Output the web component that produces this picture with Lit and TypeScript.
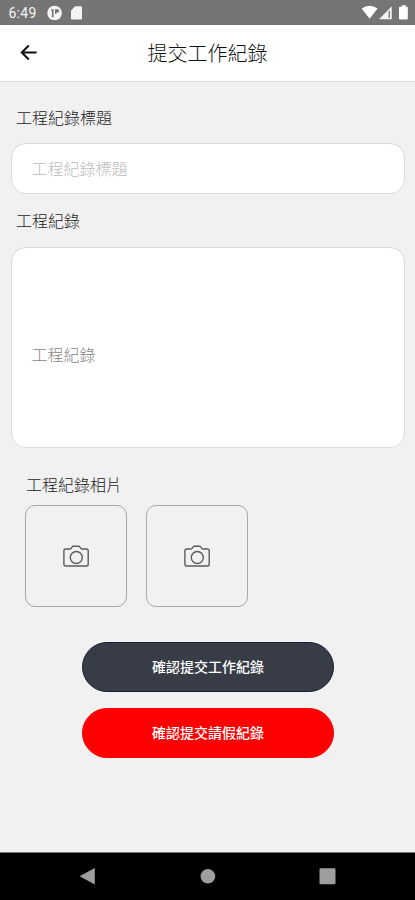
import { LitElement, html, css } from "lit";
import { customElement, property } from "lit/decorators.js";

@customElement("status-bar")
class StatusBar extends LitElement {
  static styles = css`
    :host { display: flex; height: 24.5px; flex: none; background: #757575; color: #fff; align-items: center; padding: 0 4px 0 8.5px; box-sizing: border-box; }
    .time { font: 14px/24px Roboto, sans-serif; width: 38.5px; color: #f4f4f4; padding-top: 2px; letter-spacing: .25px; }
    .gap { flex: 1; }
    svg { display: block; }
  `;
  render() {
    return html`
      <span class="time">6:49</span>
      <svg width="40" height="24" viewBox="0 0 40 24">
        <circle cx="7.6" cy="13" r="7.3" fill="#f4f4f4"/>
        <path d="M4.200 9.200H6.600V17.200H4.900V11H4.200ZM8 9.200H10.800Q12.200 9.200 12.200 10.700T10.800 12.400H9.400V14H8Z" fill="#757575"/>
        <path d="M28.200 6.200H34q1 0 1 1V18.600q0 1-1 1H25q-1 0-1-1V10.400Z" fill="#f4f4f4"/>
      </svg>
      <span class="gap"></span>
      <svg width="50" height="24" viewBox="0 0 50 24">
        <path d="M0.600 8.600Q8.500 2.800 16.600 8.600L8.600 18.800Z" fill="#fff"/>
        <path d="M30.800 6.200V19.200H18Z" fill="#f0f0f0"/>
        <path d="M28.300 11v7" stroke="#757575" stroke-width="1.300"/>
        <path d="M38.800 6.800h2v-1.600h4v1.600h1.200q.8 0 .8.800v11q0 .8-.8.800h-7.200q-.8 0-.8-.8v-11q0-.8.8-.8z" fill="#fff"/>
      </svg>`;
  }
}

@customElement("photo-slot")
class PhotoSlot extends LitElement {
  static styles = css`
    :host { display: flex; width: 102px; height: 102px; box-sizing: border-box; border: 1.4px solid #a9a9a9; border-radius: 10px; align-items: center; justify-content: center; }
    svg { display: block; }
  `;
  render() {
    return html`<svg width="28" height="24" viewBox="0 0 28 24" fill="none" stroke="#5c5c5c" stroke-width="1.400" stroke-linejoin="round">
      <path d="M3.700 5H7.800Q8.800 5 9.300 4.200L10 3Q10.400 2.200 11.300 2.200H16.600Q17.500 2.200 17.900 3L18.600 4.200Q19.100 5 20.100 5H24.400Q26.200 5 26.200 6.800V20.200Q26.200 22 24.400 22H3.700Q1.900 22 1.900 20.200V6.800Q1.900 5 3.700 5Z"/>
      <circle cx="14.300" cy="13.500" r="6"/>
    </svg>`;
  }
}

@customElement("pill-button")
class PillButton extends LitElement {
  @property() label = "";
  static styles = css`
    :host { display: block; width: 252px; height: 50px; }
    button { display: block; width: 100%; height: 100%; padding: 0 0 2px; border: 1px solid var(--edge); border-radius: 25px; background: var(--fill); color: #fff; font: 500 14px/46px "Noto Sans CJK TC", sans-serif; text-align: center; }
  `;
  render() {
    return html`<button>${this.label}</button>`;
  }
}

@customElement("app-root")
class AppRoot extends LitElement {
  static styles = css`
    :host { display: flex; flex-direction: column; height: 900px; background: #f1f1f1; font-family: "Noto Sans CJK TC", sans-serif; overflow: hidden; }
    .header { height: 57px; flex: none; box-sizing: border-box; background: #fff; border-bottom: 1.500px solid #dedede; display: grid; grid-template-columns: 56px 1fr 56px; align-items: center; }
    .back { display: block; margin-left: 18px; }
    h1 { margin: 0; text-align: center; font-size: 20px; line-height: 30px; font-weight: 300; color: #111; }
    main { flex: 1; padding: 23.500px 10.500px 0; }
    label { display: block; height: 24px; line-height: 24px; font-size: 16px; font-weight: 300; color: #1c1c1c; padding-left: 5.500px; }
    input, textarea { display: block; width: 100%; box-sizing: border-box; background: #fff; border: 1.200px solid #dcdcdc; border-radius: 15px; font: 300 16px/24px "Noto Sans CJK TC", sans-serif; outline: none; resize: none; }
    input { height: 51px; padding: 0 20px; margin: 13.500px 0 14px; }
    textarea { height: 201px; padding: 94.500px 20px 0; margin: 15px 0 24px; overflow: hidden; }
    input::placeholder { color: #bdbdbd; opacity: 1; }
    textarea::placeholder { color: #858585; opacity: 1; }
    .photo-label { padding-left: 15.500px; }
    .photos { display: flex; gap: 19px; padding-left: 14.500px; margin-top: 9px; }
    .actions { display: flex; flex-direction: column; align-items: center; gap: 16px; margin-top: 35px; padding-left: 1px; }
    .primary { --fill: #373c47; --edge: #1c2038; }
    .danger { --fill: #ff0000; --edge: #ff0000; }
    .nav { height: 48px; flex: none; box-sizing: border-box; background: #000; border-top: 1px solid #777; }
    .nav svg { display: block; }
  `;
  render() {
    return html`
      <status-bar></status-bar>
      <header class="header">
        <svg class="back" width="22" height="20" viewBox="0 0 22 20" fill="none" stroke="#111" stroke-width="2"><path d="M18.600 9.500H4M10.800 2.500L3.800 9.500L10.800 16.500"/></svg>
        <h1>提交工作紀錄</h1>
      </header>
      <main>
        <label for="title">工程紀錄標題</label>
        <input id="title" placeholder="工程紀錄標題">
        <label for="body">工程紀錄</label>
        <textarea id="body" placeholder="工程紀錄"></textarea>
        <label class="photo-label">工程紀錄相片</label>
        <div class="photos"><photo-slot></photo-slot><photo-slot></photo-slot></div>
        <div class="actions">
          <pill-button class="primary" label="確認提交工作紀錄"></pill-button>
          <pill-button class="danger" label="確認提交請假紀錄"></pill-button>
        </div>
      </main>
      <nav class="nav">
        <svg width="415" height="47" viewBox="0 0 415 47" fill="#9e9e9e">
          <path d="M94.800 15V31.500L79.600 23.300Z"/>
          <circle cx="207.900" cy="23.300" r="7.300"/>
          <rect x="319.500" y="15.300" width="16" height="16" rx="1.300"/>
        </svg>
      </nav>`;
  }
}
